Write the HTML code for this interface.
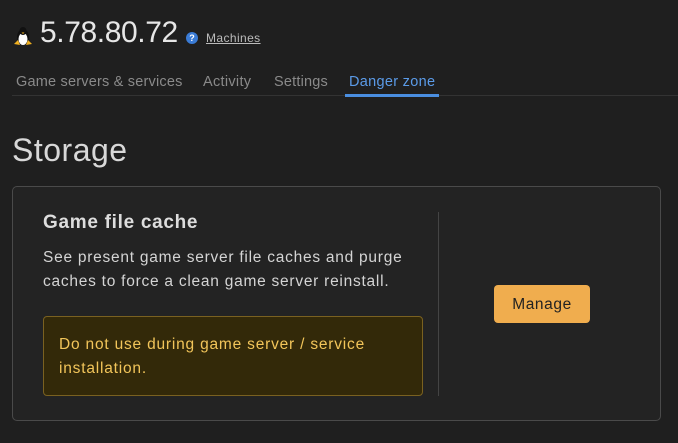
<!DOCTYPE html>
<html><head><style>
*{margin:0;padding:0;box-sizing:border-box}
body{width:678px;height:443px;background:#1f1f1f;font-family:"Liberation Sans",sans-serif;color:#ddd;position:relative;overflow:hidden}
.a{position:absolute;white-space:nowrap}
</style></head><body>
<svg class="a" style="left:12px;top:25px" width="22" height="22" viewBox="0 0 22 22">
<ellipse cx="11" cy="12" rx="6" ry="8" fill="#111"/>
<ellipse cx="11" cy="14" rx="4.5" ry="6" fill="#fff"/>
<ellipse cx="11" cy="6" rx="3.5" ry="4" fill="#111"/>
<path d="M2 19 L6 15 L8 20 Z M20 19 L16 15 L14 20 Z" fill="#f0b020"/>
<path d="M9.5 7.5 L12.5 7.5 L11 9 Z" fill="#f0b020"/>
</svg>
<div class="a" style="left:40px;top:16px;font-size:30px;color:#e6e6e6;letter-spacing:-0.4px">5.78.80.72</div>
<div class="a" style="left:186px;top:32px;width:12px;height:12px;border-radius:50%;background:#3a7bd5;color:#fff;font-size:9px;font-weight:bold;text-align:center;line-height:12px">?</div>
<div class="a" style="left:206px;top:31px;font-size:12px;color:#bbb;text-decoration:underline;letter-spacing:0.4px">Machines</div>
<div class="a" style="left:16px;top:74px;font-size:14.5px;color:#8a8a8a;letter-spacing:0.2px">Game servers &amp; services</div>
<div class="a" style="left:203px;top:74px;font-size:14.5px;color:#8a8a8a;letter-spacing:0.3px">Activity</div>
<div class="a" style="left:274px;top:74px;font-size:14.5px;color:#8a8a8a;letter-spacing:0.2px">Settings</div>
<div class="a" style="left:349px;top:74px;font-size:14.5px;color:#5b9be8;letter-spacing:0.3px">Danger zone</div>
<div class="a" style="left:12px;top:95px;width:666px;height:1px;background:#333"></div>
<div class="a" style="left:345px;top:94px;width:94px;height:3px;background:#4a8ee0"></div>
<div class="a" style="left:12px;top:132px;font-size:32px;color:#d8d8d8;letter-spacing:0.5px">Storage</div>
<div class="a" style="left:12px;top:186px;width:649px;height:235px;border:1px solid #4a4a4a;border-radius:5px;background:#232323"></div>
<div class="a" style="left:43px;top:212px;font-size:19px;font-weight:bold;color:#ddd;letter-spacing:0.7px">Game file cache</div>
<div class="a" style="left:43px;top:246px;font-size:15.5px;line-height:24px;color:#d4d4d4;letter-spacing:0.75px">See present game server file caches and purge<br>caches to force a clean game server reinstall.</div>
<div class="a" style="left:43px;top:316px;width:380px;height:80px;border:1px solid #7a6120;border-radius:4px;background:#332909;padding:16px 15px;font-size:15.5px;line-height:24px;color:#f2c55a;white-space:normal;letter-spacing:0.8px">Do not use during game server / service installation.</div>
<div class="a" style="left:438px;top:212px;width:1px;height:184px;background:#444"></div>
<div class="a" style="left:494px;top:285px;width:96px;height:38px;border-radius:4px;background:#f0ad4e;color:#222;font-size:15.5px;text-align:center;line-height:40px;letter-spacing:0.6px">Manage</div>
</body></html>
